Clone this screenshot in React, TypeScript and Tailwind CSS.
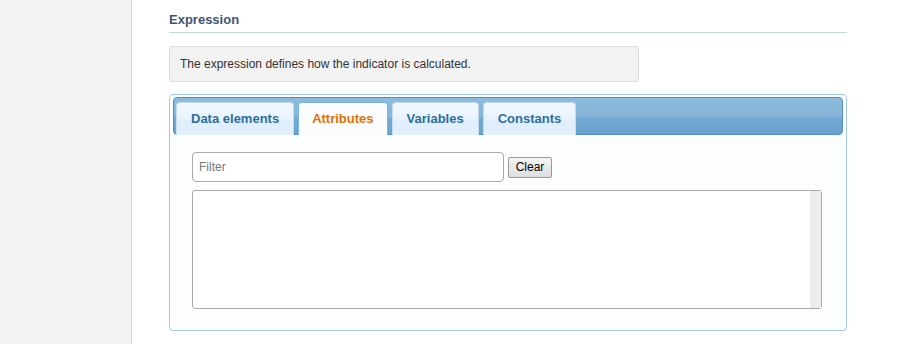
const tabs = ["Data elements", "Attributes", "Variables", "Constants"];

export default function App() {
  return (
    <div className="flex h-[344px] w-[912px] bg-white font-['Liberation_Sans',Arial,sans-serif] overflow-hidden">
      <div className="w-[132px] shrink-0 border-r border-[#dddddd] bg-[#f2f2f2]" />
      <div className="flex w-[678px] flex-col pl-[37px] box-content">
        <h3 className="border-b border-[#c6d6e6] pb-[5px] pt-[12px] text-[13px] font-bold leading-[15px] text-[#3e5372]">
          Expression
        </h3>
        <div className="mt-[13px] w-[470px] rounded-[3px] border border-[#dcdcdc] bg-[#f2f2f2] px-[10px] py-[10px] text-[12px] leading-[14px] text-[#333333]">
          The expression defines how the indicator is calculated.
        </div>

        <div className="mt-[12px] rounded-[4px] border border-[#a6c9e2] bg-[#fcfdfd] px-[3px] pt-[2px]">
          <div className="flex h-[38px] items-end gap-[4px] rounded-[4px] border border-[#4f8fc6] bg-[linear-gradient(180deg,#8dbbdd_0%,#86b5d9_52%,#73a9d3_56%,#6aa2cf_100%)] px-[2px]">
            {tabs.map((t) => {
              const active = t === "Attributes";
              return (
                <div
                  key={t}
                  className={
                    active
                      ? "-mb-px flex h-[33px] items-center rounded-t-[4px] border border-b-0 border-[#79b7e7] bg-[#f9fbfd] px-[13px] text-[13px] font-bold text-[#e17009]"
                      : "-mb-px flex h-[33px] items-center rounded-t-[4px] border border-b-0 border-[#c5dbec] bg-[linear-gradient(180deg,#f2f8fe_0%,#e9f3fd_50%,#dfeefb_55%,#e3f0fc_100%)] px-[14px] text-[13px] font-bold text-[#2e6e9e]"
                  }
                >
                  {t}
                </div>
              );
            })}
          </div>

          <div className="px-[19px] pb-[21px] pt-[17px]">
            <div className="flex items-center gap-[4px]">
              <input
                placeholder="Filter"
                className="h-[30px] w-[312px] rounded-[4px] border border-[#aaaaaa] bg-white px-[6px] text-[12px] text-[#333] outline-none placeholder:text-[#777777]"
              />
              <button className="h-[21px] w-[44px] rounded-[2px] border border-[#999999] bg-[linear-gradient(180deg,#f4f4f4,#dedede)] text-[12px] leading-[19px] text-black">
                Clear
              </button>
            </div>
            <div className="mt-[8px] flex h-[119px] w-[630px] justify-end rounded-[3px] border border-[#aaaaaa] bg-white">
              <div className="w-[11px] bg-[#ededed]" />
            </div>
          </div>
        </div>
      </div>
    </div>
  );
}
